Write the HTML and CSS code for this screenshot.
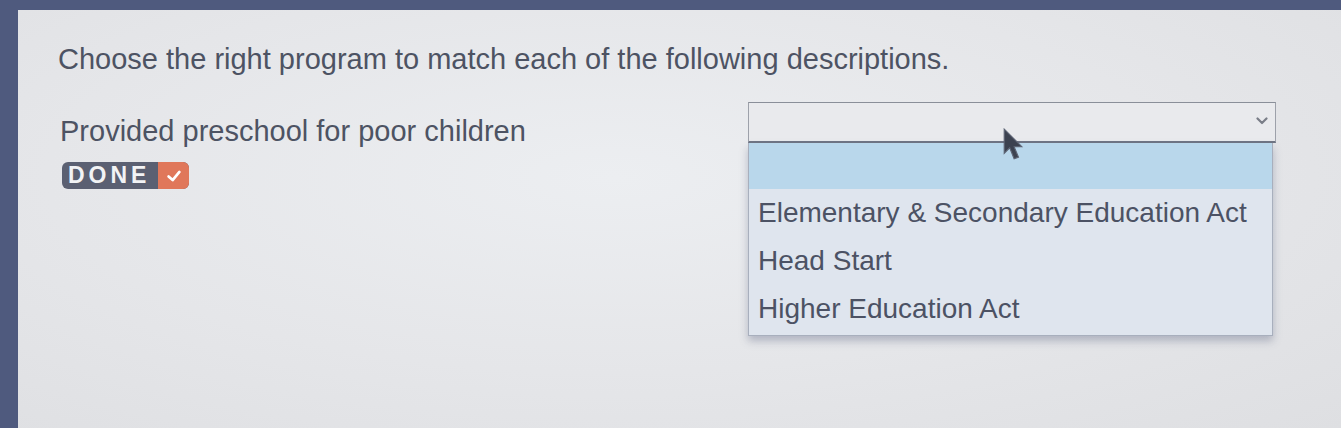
FILE: index.html
```html
<!DOCTYPE html>
<html>
<head>
<meta charset="utf-8">
<link rel="stylesheet" href="styles.css">
</head>
<body>
<div class="screen">
  <div class="panel">
    <h1 class="prompt">Choose the right program to match each of the following descriptions.</h1>
    <div class="row">
      <div class="item">
        <div class="label">Provided preschool for poor children</div>
        <div class="done"><span class="done-text">DONE</span><span class="done-check"><svg viewBox="0 0 20 20" width="18" height="18"><path d="M4 10.5 L8.5 14.5 L16 5.5" fill="none" stroke="#fff" stroke-width="3" stroke-linecap="round" stroke-linejoin="round"/></svg></span></div>
      </div>
      <div class="select-wrap">
        <div class="select">
          <svg class="chev" viewBox="0 0 12 8" width="12" height="8"><path d="M1.5 1.5 L6 6 L10.5 1.5" fill="none" stroke="#7a7e88" stroke-width="2.2" stroke-linecap="round" stroke-linejoin="round"/></svg>
        </div>
        <ul class="options">
          <li class="opt selected">&nbsp;</li>
          <li class="opt">Elementary &amp; Secondary Education Act</li>
          <li class="opt">Head Start</li>
          <li class="opt">Higher Education Act</li>
        </ul>
        <svg class="cursor" viewBox="0 0 20 30" width="22" height="33"><path d="M2 1 L2 23 L7 18 L11 28 L15 26.5 L11 17 L18 17 Z" fill="#3c4250" stroke="#5d6474" stroke-width="1"/></svg>
      </div>
    </div>
  </div>
</div>
</body>
</html>
```
FILE: styles.css
```css
html, body {
  margin: 0;
  padding: 0;
  height: 100%;
}
body {
  background: #4f5a7e;
  overflow: hidden;
  font-family: "Liberation Sans", Arial, sans-serif;
}
.screen {
  height: 428px;
  padding: 10px 0 0 18px;
  box-sizing: border-box;
}
.panel {
  height: 100%;
  background: radial-gradient(ellipse at 45% 40%, #eceef1 0%, #e5e6e9 55%, #dedfe2 100%);
  padding: 31px 0 0 40px;
  box-sizing: border-box;
  color: #4d5363;
}
.prompt {
  margin: 0;
  font-size: 29px;
  font-weight: normal;
  line-height: 36px;
}
.row {
  display: grid;
  grid-template-columns: 690px 528px;
  margin-top: 25px;
}
.item {
  padding-top: 14px;
  padding-left: 2px;
}
.label {
  font-size: 29px;
  line-height: 30px;
}
.done {
  display: inline-flex;
  margin-top: 16px;
  margin-left: 2px;
  height: 27px;
  border-radius: 6px;
  overflow: hidden;
  background: #5b6072;
}
.done-text {
  color: #f2f3f5;
  font-weight: bold;
  font-size: 23px;
  letter-spacing: 4px;
  line-height: 27px;
  padding: 0 8px 0 6px;
}
.done-check {
  width: 31px;
  background: #e0775a;
  display: flex;
  align-items: center;
  justify-content: center;
}
.select-wrap {
  position: relative;
}
.select {
  height: 38px;
  border: 1px solid #9da1aa;
  border-top-color: #8a8f99;
  border-bottom: 2px solid #6f7584;
  background: #e9eaed;
  position: relative;
}
.chev {
  position: absolute;
  right: 7px;
  top: 14px;
}
.options {
  position: absolute;
  left: 0;
  top: 41px;
  width: 523px;
  margin: 0;
  padding: 0 0 2px 0;
  list-style: none;
  background: #dfe5ee;
  border: 1px solid #a8afbd;
  border-top: none;
  box-shadow: 0 5px 8px rgba(80, 90, 120, 0.35);
}
.opt {
  height: 48px;
  line-height: 48px;
  padding-left: 9px;
  font-size: 28px;
  color: #4c5264;
  white-space: nowrap;
}
.opt.selected {
  height: 46px;
  background: #b9d7eb;
}
.cursor {
  position: absolute;
  left: 254px;
  top: 26px;
}
```
